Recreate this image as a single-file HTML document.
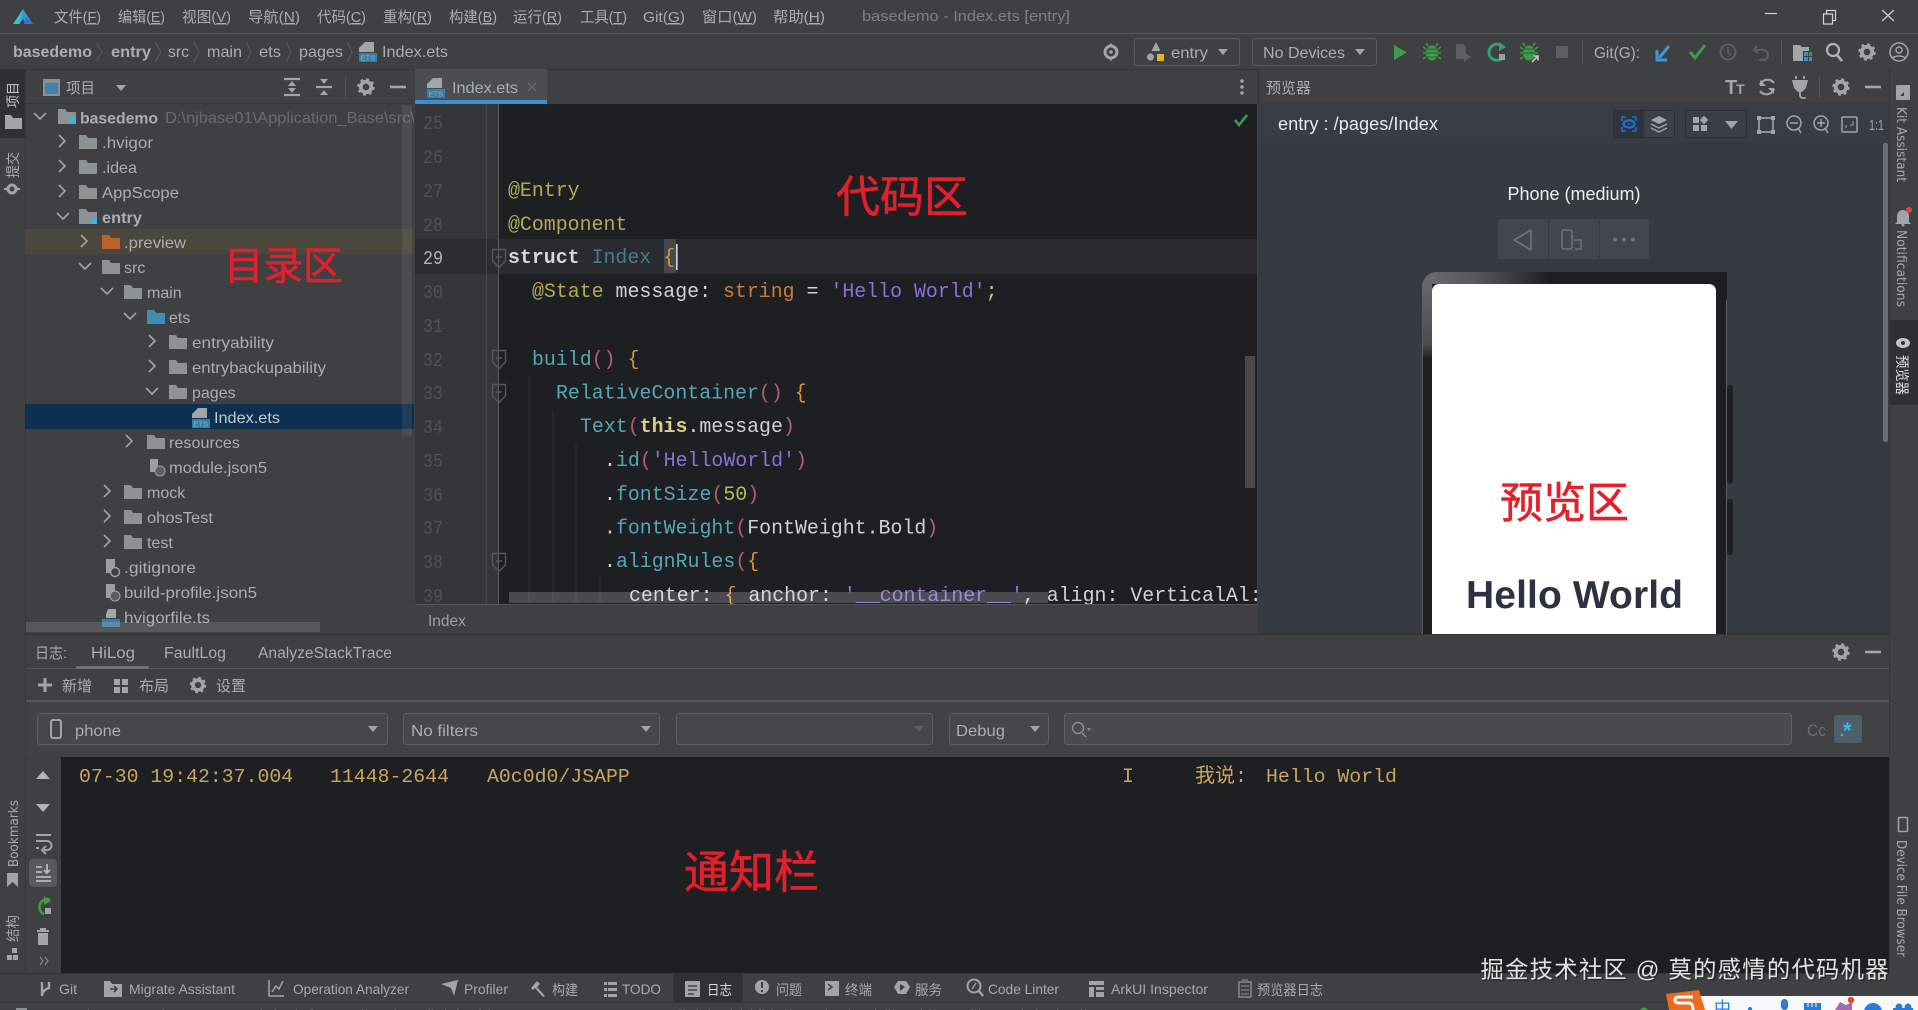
<!DOCTYPE html>
<html lang="zh-CN"><head><meta charset="utf-8"><title>basedemo - Index.ets [entry]</title>
<style>
html,body{margin:0;padding:0;width:1918px;height:1010px;overflow:hidden;background:#3e4042}
svg{display:block}
text{font-family:"Liberation Sans","Noto Sans CJK SC",sans-serif;white-space:pre}
.m{font-size:15px;fill:#a8aeb2}
.tr{font-size:16px;fill:#a9afb3}
.b{font-size:14px;fill:#a5abaf}
.c{font-family:"Liberation Mono","Noto Sans CJK SC",monospace;font-size:19.9px;fill:#cfd2d4}
.n{font-family:"Liberation Mono",monospace;font-size:19px;fill:#4f5254}
.v{font-family:"DejaVu Sans","Noto Sans CJK SC",sans-serif;font-size:13px;fill:#a5abaf}
.y{fill:#b0ab55}.w{fill:#cfd2d4}.cy{fill:#55a7b5}.pk{fill:#b0606c}.or{fill:#d9952f}.pu{fill:#8d6fd6}.st{fill:#c77d3c}.gn{fill:#a8c060}
.rd{fill:#e2202c;stroke:#e2202c;stroke-width:.6}
.s{fill:none;stroke:#a0a5a9;stroke-width:1.6}
.f{fill:#9a9fa3}
</style></head>
<body>
<svg width="1918" height="1010" viewBox="0 0 1918 1010" xmlns="http://www.w3.org/2000/svg">
<defs>
<clipPath id="ed"><rect x="499" y="103" width="758" height="501"/></clipPath>
<clipPath id="tp"><rect x="25" y="104" width="389" height="528"/></clipPath>
<clipPath id="ph"><rect x="1400" y="260" width="350" height="374"/></clipPath>
<clipPath id="sb"><rect x="0" y="1003" width="1918" height="7"/></clipPath>
<linearGradient id="tg" x1="0" y1="0" x2="1" y2="0"><stop offset="0" stop-color="#6a6d70"/><stop offset=".18" stop-color="#55585b"/><stop offset=".42" stop-color="#1d1e20"/></linearGradient>
<linearGradient id="lg" x1="0" y1="0" x2="0" y2="1"><stop offset="0" stop-color="#6a6d70"/><stop offset=".2" stop-color="#4a4c4f"/><stop offset=".24" stop-color="#1d1e20"/></linearGradient>
<path id="cr" class="s" d="M-3 -6L3 0L-3 6"/>
<path id="cd" class="s" d="M-6 -3L0 3L6 -3"/>
<path id="fo" fill="#8c9296" d="M0 -8h7l2 3h9v11H0z"/>
<path id="fb" fill="#3f8db4" d="M0 -8h7l2 3h9v11H0z"/>
<path id="fp" fill="#b9632c" d="M0 -8h7l2 3h9v11H0z"/>
<g id="fm"><path fill="#8c9296" d="M0 -9h7l2 3h9v12H0z"/><rect x="12" y="0" width="6" height="6" fill="#3eb1e6"/></g>
<g id="ets"><path fill="#a0a6aa" d="M6 0h9v10H0V6z"/><rect x="0" y="11" width="18" height="9" fill="#3a7ea6"/><text x="1.5" y="18.5" font-size="7.5" fill="#6cb6dc">ETS</text></g>
<g id="gear"><circle r="5.5" fill="none" stroke="#a0a5a9" stroke-width="4"/><circle r="8" fill="none" stroke="#a0a5a9" stroke-width="2.4" stroke-dasharray="3 3.28"/></g>
<path id="dd" fill="#a0a5a9" d="M-5 -3H5L0 3z"/>
<g id="fold"><path fill="none" stroke="#54575a" stroke-width="1.4" d="M-6.5 -8.5H6.5V3L0 9.5L-6.5 3z"/><path stroke="#54575a" stroke-width="1.4" d="M-3 -1H3"/></g>
</defs>

<!-- base -->
<rect width="1918" height="1010" fill="#3e4042"/>
<rect x="0" y="33" width="1918" height="1" fill="#55575a"/>
<rect x="0" y="69" width="1918" height="1" fill="#323436"/>

<!-- title -->
<path d="M23 9L33 24H26L23 19L19.5 24H13z" fill="#2f9ad6"/><path d="M23 9L18 17L13 24H19.5z" fill="#37c4c9"/><path d="M26.5 17L33 24H24z" fill="#3b6fd9"/>
<text class="m" x="54" y="22" textLength="47" lengthAdjust="spacingAndGlyphs">文件(<tspan text-decoration="underline">F</tspan>)</text>
<text class="m" x="118" y="22" textLength="47" lengthAdjust="spacingAndGlyphs">编辑(<tspan text-decoration="underline">E</tspan>)</text>
<text class="m" x="182" y="22" textLength="49" lengthAdjust="spacingAndGlyphs">视图(<tspan text-decoration="underline">V</tspan>)</text>
<text class="m" x="248" y="22" textLength="52" lengthAdjust="spacingAndGlyphs">导航(<tspan text-decoration="underline">N</tspan>)</text>
<text class="m" x="317" y="22" textLength="49" lengthAdjust="spacingAndGlyphs">代码(<tspan text-decoration="underline">C</tspan>)</text>
<text class="m" x="383" y="22" textLength="49" lengthAdjust="spacingAndGlyphs">重构(<tspan text-decoration="underline">R</tspan>)</text>
<text class="m" x="449" y="22" textLength="48" lengthAdjust="spacingAndGlyphs">构建(<tspan text-decoration="underline">B</tspan>)</text>
<text class="m" x="513" y="22" textLength="49" lengthAdjust="spacingAndGlyphs">运行(<tspan text-decoration="underline">R</tspan>)</text>
<text class="m" x="580" y="22" textLength="47" lengthAdjust="spacingAndGlyphs">工具(<tspan text-decoration="underline">T</tspan>)</text>
<text class="m" x="643" y="22" textLength="42" lengthAdjust="spacingAndGlyphs">Git(<tspan text-decoration="underline">G</tspan>)</text>
<text class="m" x="702" y="22" textLength="55" lengthAdjust="spacingAndGlyphs">窗口(<tspan text-decoration="underline">W</tspan>)</text>
<text class="m" x="773" y="22" textLength="52" lengthAdjust="spacingAndGlyphs">帮助(<tspan text-decoration="underline">H</tspan>)</text>
<text x="862" y="21" font-size="15" fill="#7c8185" textLength="208" lengthAdjust="spacingAndGlyphs">basedemo - Index.ets [entry]</text>
<path d="M1765 13.5H1777" stroke="#d0d2d4" stroke-width="1.2"/>
<path d="M1823.5 14h9v10h-9zM1826.5 14v-3.5h9v10h-3" fill="none" stroke="#d0d2d4" stroke-width="1.2"/>
<path d="M1882 10L1894 21M1894 10L1882 21" stroke="#d0d2d4" stroke-width="1.2"/>

<!-- breadcrumb -->
<text x="13" y="57" font-weight="bold" class="tr" textLength="79" lengthAdjust="spacingAndGlyphs">basedemo</text>
<text x="111" y="57" font-weight="bold" class="tr" textLength="40" lengthAdjust="spacingAndGlyphs">entry</text>
<text x="168" y="57" class="tr" textLength="21" lengthAdjust="spacingAndGlyphs">src</text>
<text x="207" y="57" class="tr" textLength="35" lengthAdjust="spacingAndGlyphs">main</text>
<text x="259" y="57" class="tr" textLength="22" lengthAdjust="spacingAndGlyphs">ets</text>
<text x="299" y="57" class="tr" textLength="44" lengthAdjust="spacingAndGlyphs">pages</text>
<text x="382" y="57" class="tr" textLength="66" lengthAdjust="spacingAndGlyphs">Index.ets</text>
<path d="M96 42L102 52L96 62M155 42L161 52L155 62M194 42L199 52L194 62M246 42L251 52L246 62M286 42L291 52L286 62M347 42L352 52L347 62" fill="none" stroke="#56595b" stroke-width="1.2"/>
<use href="#ets" x="359" y="42"/>

<!-- main toolbar right -->
<g transform="translate(1111,52)"><circle r="6" fill="none" stroke="#a0a5a9" stroke-width="3"/><circle r="1.8" fill="#a0a5a9"/><path d="M0 -8.5V-6M0 6V8.5" stroke="#a0a5a9" stroke-width="2"/></g>
<rect x="1134.5" y="38.5" width="105" height="27" rx="3" fill="#3e4042" stroke="#5a5d60"/>
<path d="M1156 42l4.5 9h-9z" fill="#a0a5a9"/><circle cx="1150.5" cy="57" r="3.5" fill="#a0a5a9"/><rect x="1157" y="54" width="7" height="7" fill="#e6b422"/>
<text x="1171" y="58" class="tr" textLength="37" lengthAdjust="spacingAndGlyphs">entry</text>
<use href="#dd" transform="translate(1223,52)"/>
<rect x="1252.5" y="38.5" width="124" height="27" rx="3" fill="#3e4042" stroke="#5a5d60"/>
<text x="1263" y="58" class="tr" textLength="82" lengthAdjust="spacingAndGlyphs">No Devices</text>
<use href="#dd" transform="translate(1360,52)"/>
<path d="M1394 45L1407 52.5L1394 60z" fill="#3f9a4a"/>
<g><ellipse cx="1432" cy="53" rx="6" ry="7.5" fill="#3f9a4a"/><path d="M1426 49h12M1426 53h12M1426 57h12" stroke="#2a5f30" stroke-width="1"/><path d="M1428 46l-2-3M1436 46l2-3M1426 49l-3-2M1438 49l3-2M1426 53h-3M1438 53h3M1426 57l-3 2M1438 57l3 2" stroke="#3f9a4a" stroke-width="1.6" fill="none"/></g>
<path d="M1456 44h7l3 3v12h-10z" fill="#5b5f62"/><path d="M1464 52l7 5-7 5z" fill="#5b5f62"/>
<path d="M1503 47a8 8 0 1 0 1 9" fill="none" stroke="#2ea36a" stroke-width="3"/><path d="M1499 42l7 5-7 4z" fill="#2ea36a"/><rect x="1499" y="54" width="6" height="6" fill="#9a9fa3"/>
<g><ellipse cx="1529" cy="53" rx="6" ry="7.5" fill="#3f9a4a"/><path d="M1523 49h12M1523 53h12" stroke="#2a5f30" stroke-width="1"/><path d="M1525 46l-2-3M1533 46l2-3M1523 49l-3-2M1535 49l3-2M1523 53h-3M1535 53h3M1523 57l-3 2M1535 57l3 2" stroke="#3f9a4a" stroke-width="1.6" fill="none"/></g><path d="M1532 62l6-6M1533.500 56h4.500v4.500" stroke="#c0c4c6" stroke-width="1.6" fill="none"/>
<rect x="1556" y="46" width="12" height="12" fill="#5b5f62"/>
<rect x="1582" y="40" width="1" height="24" fill="#535658"/>
<text x="1594" y="58" class="tr" textLength="46" lengthAdjust="spacingAndGlyphs">Git(G):</text>
<path d="M1669 46L1659 58M1657 50V60H1667" fill="none" stroke="#3a9ad9" stroke-width="3"/>
<path d="M1690 52l5 6 10-13" fill="none" stroke="#3f9a4a" stroke-width="3"/>
<circle cx="1728" cy="52" r="7.5" fill="none" stroke="#5b5f62" stroke-width="2"/><path d="M1728 47v5l3 3" fill="none" stroke="#5b5f62" stroke-width="1.6"/>
<path d="M1757 46l-3 4 4 3M1755 50h8a5 5 0 0 1 0 10h-4" fill="none" stroke="#5b5f62" stroke-width="2"/>
<rect x="1781" y="40" width="1" height="24" fill="#535658"/>
<path d="M1793 45h7l2 2h7v14h-16z" fill="#a0a5a9"/><rect x="1803" y="51" width="8" height="10" fill="#3e4042"/><rect x="1804" y="52" width="4" height="4" fill="#3a8ec9"/><rect x="1809" y="52" width="3" height="4" fill="#3f9a4a"/><rect x="1804" y="57" width="4" height="4" fill="#3a8ec9"/><rect x="1809" y="57" width="3" height="4" fill="#3a8ec9"/>
<circle cx="1833" cy="50" r="6" fill="none" stroke="#b0b4b6" stroke-width="2.2"/><path d="M1837 55l5 6" stroke="#b0b4b6" stroke-width="2.6"/>
<use href="#gear" transform="translate(1867,52) scale(.95)"/>
<circle cx="1899" cy="52" r="9" fill="none" stroke="#a0a5a9" stroke-width="1.5"/><circle cx="1899" cy="50" r="3" fill="none" stroke="#a0a5a9" stroke-width="1.4"/><path d="M1892 58q7-4 14 0" fill="none" stroke="#a0a5a9" stroke-width="1.4"/>

<!-- left stripe -->
<rect x="0" y="70" width="25" height="68" fill="#2e3032"/>
<rect x="25" y="69" width="1" height="904" fill="#36383a"/>
<text class="v" style="fill:#c0c4c6;font-size:14px" transform="translate(18,108) rotate(-90)" textLength="26" lengthAdjust="spacingAndGlyphs">项目</text>
<path d="M5 115h6l2 3h9v11H5z" fill="#a0a5a9"/>
<text class="v" transform="translate(18,178) rotate(-90)" style="font-size:14px" textLength="26" lengthAdjust="spacingAndGlyphs">提交</text>
<circle cx="12" cy="189" r="4" fill="none" stroke="#a0a5a9" stroke-width="3"/><path d="M4 189h3M17 189h3" stroke="#a0a5a9" stroke-width="2"/>
<text class="v" transform="translate(18,867) rotate(-90)" textLength="67" lengthAdjust="spacingAndGlyphs">Bookmarks</text>
<path d="M7 873h11v14l-5.5-5-5.5 5z" fill="#a0a5a9"/>
<text class="v" transform="translate(18,942) rotate(-90)" style="font-size:14px" textLength="27" lengthAdjust="spacingAndGlyphs">结构</text>
<rect x="12" y="948" width="5" height="5" fill="#a0a5a9"/><rect x="7" y="955" width="5" height="5" fill="#a0a5a9"/><rect x="13" y="955" width="5" height="5" fill="#a0a5a9"/>

<!-- project header -->
<rect x="26" y="103" width="389" height="1" fill="#35373a"/>
<rect x="43" y="79" width="17" height="17" fill="#8a9094"/><rect x="45" y="83" width="13" height="11" fill="#3d85a8"/>
<text x="66" y="93" class="m" textLength="29" lengthAdjust="spacingAndGlyphs">项目</text>
<use href="#dd" transform="translate(121,88)"/>
<path d="M284 79h16M284 95h16" stroke="#a0a5a9" stroke-width="2.2"/><path d="M288 86l4-5 4 5zM288 88l4 5 4-5z" fill="#a0a5a9"/>
<path d="M316 87h16" stroke="#a0a5a9" stroke-width="2.2"/><path d="M320 79h8l-4 5zM320 95h8l-4-5z" fill="#a0a5a9"/>
<rect x="345" y="76" width="1" height="22" fill="#505356"/>
<use href="#gear" transform="translate(366,87) scale(.95)"/>
<path d="M390 87h16" stroke="#a0a5a9" stroke-width="2.6"/>

<!-- tree -->
<rect x="25" y="229" width="389" height="25" fill="#4c473c"/>
<rect x="25" y="404" width="389" height="25" fill="#0d3050"/>
<g clip-path="url(#tp)">
<use href="#cd" x="40" y="116"/><use href="#fm" x="58" y="118"/>
<text x="80" y="123.5" class="tr" font-weight="bold" textLength="78" lengthAdjust="spacingAndGlyphs">basedemo</text>
<text x="165" y="123" font-size="15.6" fill="#686c6f" textLength="250" lengthAdjust="spacingAndGlyphs">D:\njbase01\Application_Base\src\</text>
<use href="#cr" x="62" y="141"/><use href="#fo" x="79" y="143"/><text x="102" y="148" class="tr" textLength="51" lengthAdjust="spacingAndGlyphs">.hvigor</text>
<use href="#cr" x="62" y="166"/><use href="#fo" x="79" y="168"/><text x="102" y="173" class="tr" textLength="35" lengthAdjust="spacingAndGlyphs">.idea</text>
<use href="#cr" x="62" y="191"/><use href="#fo" x="79" y="193"/><text x="102" y="198" class="tr" textLength="77" lengthAdjust="spacingAndGlyphs">AppScope</text>
<use href="#cd" x="63" y="216"/><use href="#fm" x="79" y="218"/><text x="102" y="223" class="tr" font-weight="bold" textLength="40" lengthAdjust="spacingAndGlyphs">entry</text>
<use href="#cr" x="84" y="241"/><use href="#fp" x="102" y="243"/><text x="124" y="248" class="tr" textLength="62" lengthAdjust="spacingAndGlyphs">.preview</text>
<use href="#cd" x="85" y="266"/><use href="#fo" x="102" y="268"/><text x="124" y="273" class="tr">src</text>
<use href="#cd" x="107" y="291"/><use href="#fo" x="124" y="293"/><text x="147" y="298" class="tr">main</text>
<use href="#cd" x="130" y="316"/><use href="#fb" x="147" y="318"/><text x="169" y="323" class="tr">ets</text>
<use href="#cr" x="152" y="341"/><use href="#fo" x="169" y="343"/><text x="192" y="348" class="tr" textLength="82" lengthAdjust="spacingAndGlyphs">entryability</text>
<use href="#cr" x="152" y="366"/><use href="#fo" x="169" y="368"/><text x="192" y="373" class="tr" textLength="134" lengthAdjust="spacingAndGlyphs">entrybackupability</text>
<use href="#cd" x="152" y="391"/><use href="#fo" x="169" y="393"/><text x="192" y="398" class="tr">pages</text>
<use href="#ets" x="192" y="408"/><text x="214" y="423" class="tr" style="fill:#c4cacd" textLength="66" lengthAdjust="spacingAndGlyphs">Index.ets</text>
<use href="#cr" x="129" y="441"/><use href="#fo" x="147" y="443"/><text x="169" y="448" class="tr" textLength="71" lengthAdjust="spacingAndGlyphs">resources</text>
<path d="M150 459h8v13h-8z" fill="#9a9fa3"/><circle cx="160" cy="471" r="5" fill="#5b5f62" stroke="#a0a5a9"/><text x="169" y="473" class="tr" textLength="98" lengthAdjust="spacingAndGlyphs">module.json5</text>
<use href="#cr" x="107" y="491"/><use href="#fo" x="124" y="493"/><text x="147" y="498" class="tr">mock</text>
<use href="#cr" x="107" y="516"/><use href="#fo" x="124" y="518"/><text x="147" y="523" class="tr" textLength="66" lengthAdjust="spacingAndGlyphs">ohosTest</text>
<use href="#cr" x="107" y="541"/><use href="#fo" x="124" y="543"/><text x="147" y="548" class="tr">test</text>
<path d="M106 559h9v14h-9z" fill="#9a9fa3"/><circle cx="115" cy="572" r="4.5" fill="#3e4042" stroke="#a0a5a9" stroke-width="1.4"/><text x="124" y="573" class="tr" textLength="72" lengthAdjust="spacingAndGlyphs">.gitignore</text>
<path d="M106 584h9v14h-9z" fill="#9a9fa3"/><circle cx="115" cy="596" r="5" fill="#5b5f62" stroke="#a0a5a9"/><text x="124" y="598" class="tr" textLength="133" lengthAdjust="spacingAndGlyphs">build-profile.json5</text>
<path d="M108 609h8v9h-10v-4z" fill="#a0a6aa"/><rect x="102" y="619" width="18" height="8" fill="#3a7ea6"/><text x="124" y="623" class="tr" textLength="86" lengthAdjust="spacingAndGlyphs">hvigorfile.ts</text>
</g>
<rect x="402" y="105" width="10" height="331" fill="#fff" opacity=".07"/>
<rect x="26" y="622" width="294" height="10" fill="#fff" opacity=".13"/>

<!-- editor tab bar -->
<rect x="415" y="69" width="132" height="34" fill="#4b4e51"/>
<rect x="415" y="100" width="132" height="4" fill="#3b8fd6"/>
<use href="#ets" x="427" y="78"/>
<text x="452" y="93" class="tr" textLength="66" lengthAdjust="spacingAndGlyphs">Index.ets</text>
<path d="M528 83l8 8M536 83l-8 8" stroke="#65696c" stroke-width="1.4"/>
<circle cx="1242" cy="81" r="1.8" fill="#a0a5a9"/><circle cx="1242" cy="87" r="1.8" fill="#a0a5a9"/><circle cx="1242" cy="93" r="1.8" fill="#a0a5a9"/>

<!-- editor -->
<rect x="415" y="104" width="84" height="500" fill="#343638"/>
<rect x="499" y="104" width="758" height="500" fill="#1e1f23"/>
<rect x="415" y="239" width="84" height="35" fill="#2b2d31"/>
<rect x="499" y="239" width="758" height="35" fill="#292b30"/>
<rect x="486" y="104" width="1" height="500" fill="#45474a"/>
<rect x="498" y="104" width="1" height="500" fill="#5a5c5f"/>
<path d="M529 375V604M553 410V604M576 444V604M600 578V604" stroke="#2d2f33" stroke-width="1"/>
<text class="n" x="423" y="129" textLength="20" lengthAdjust="spacingAndGlyphs">25</text>
<text class="n" x="423" y="163" textLength="20" lengthAdjust="spacingAndGlyphs">26</text>
<text class="n" x="423" y="197" textLength="20" lengthAdjust="spacingAndGlyphs">27</text>
<text class="n" x="423" y="231" textLength="20" lengthAdjust="spacingAndGlyphs">28</text>
<text class="n" x="423" y="264" textLength="20" lengthAdjust="spacingAndGlyphs" style="fill:#b3b6b8">29</text>
<text class="n" x="423" y="298" textLength="20" lengthAdjust="spacingAndGlyphs">30</text>
<text class="n" x="423" y="332" textLength="20" lengthAdjust="spacingAndGlyphs">31</text>
<text class="n" x="423" y="366" textLength="20" lengthAdjust="spacingAndGlyphs">32</text>
<text class="n" x="423" y="399" textLength="20" lengthAdjust="spacingAndGlyphs">33</text>
<text class="n" x="423" y="433" textLength="20" lengthAdjust="spacingAndGlyphs">34</text>
<text class="n" x="423" y="467" textLength="20" lengthAdjust="spacingAndGlyphs">35</text>
<text class="n" x="423" y="501" textLength="20" lengthAdjust="spacingAndGlyphs">36</text>
<text class="n" x="423" y="534" textLength="20" lengthAdjust="spacingAndGlyphs">37</text>
<text class="n" x="423" y="568" textLength="20" lengthAdjust="spacingAndGlyphs">38</text>
<text class="n" x="423" y="602" textLength="20" lengthAdjust="spacingAndGlyphs">39</text>
<use href="#fold" x="499" y="258"/><use href="#fold" x="499" y="359"/><use href="#fold" x="499" y="393"/><use href="#fold" x="499" y="562"/>
<rect x="664" y="239" width="12" height="34" fill="#45484d"/>
<g clip-path="url(#ed)">
<text class="c y" x="508" y="196">@Entry</text>
<text class="c y" x="508" y="230">@Component</text>
<text class="c" x="508" y="263"><tspan font-weight="bold" fill="#d5d8da">struct</tspan> <tspan fill="#457f85">Index</tspan> <tspan class="or">{</tspan></text>
<text class="c" x="532" y="297"><tspan class="y">@State</tspan> message: <tspan class="st">string</tspan> = <tspan class="pu">'Hello World'</tspan><tspan fill="#c9c48a">;</tspan></text>
<text class="c" x="532" y="365"><tspan class="cy">build</tspan><tspan class="pk">()</tspan> <tspan class="or">{</tspan></text>
<text class="c" x="556" y="398.5"><tspan class="cy">RelativeContainer</tspan><tspan class="pk">()</tspan> <tspan class="or">{</tspan></text>
<text class="c" x="580" y="432"><tspan class="cy">Text</tspan><tspan class="pk">(</tspan><tspan font-weight="bold" fill="#d6cf8a">this</tspan>.message<tspan class="pk">)</tspan></text>
<text class="c" x="604" y="466">.<tspan class="cy">id</tspan><tspan class="pk">(</tspan><tspan class="pu">'HelloWorld'</tspan><tspan class="pk">)</tspan></text>
<text class="c" x="604" y="500">.<tspan class="cy">fontSize</tspan><tspan class="pk">(</tspan><tspan class="gn">50</tspan><tspan class="pk">)</tspan></text>
<text class="c" x="604" y="533.5">.<tspan class="cy">fontWeight</tspan><tspan class="pk">(</tspan>FontWeight.Bold<tspan class="pk">)</tspan></text>
<text class="c" x="604" y="567">.<tspan class="cy">alignRules</tspan><tspan class="pk">(</tspan><tspan class="or">{</tspan></text>
<text class="c" x="629" y="601">center: <tspan class="or">{</tspan> anchor: <tspan class="pu">'__container__'</tspan>, align: VerticalAl:</text>
</g>
<rect x="676" y="244" width="1.6" height="26" fill="#d5d8da"/>
<text x="836" y="212" font-size="44" class="rd">代码区</text>
<path d="M1235 120l4 5 8-10" fill="none" stroke="#3f9a55" stroke-width="2.6"/>
<rect x="1245" y="356" width="10" height="132" fill="#47484b"/>
<rect x="509" y="592" width="539" height="11" fill="#fff" opacity=".2"/>
<rect x="415" y="604" width="843" height="1" fill="#55575a"/>
<text x="428" y="626" font-size="15.5" fill="#9ba1a5">Index</text>

<!-- tree label -->
<text x="224" y="280" font-size="39.500" class="rd">目录区</text>

<!-- preview panel -->
<rect x="1258" y="69" width="631" height="34" fill="#3e4042"/>
<rect x="1258" y="69" width="1" height="34" fill="#333537"/>
<text x="1266" y="93" font-size="15" fill="#a8aeb2">预览器</text>
<text x="1725" y="94" font-size="20" fill="#a0a5a9" font-weight="bold">T</text><text x="1736" y="94" font-size="14" fill="#a0a5a9" font-weight="bold">T</text>
<path d="M1774 83a8 8 0 0 0-14 2M1760 91a8 8 0 0 0 14-2" fill="none" stroke="#a0a5a9" stroke-width="2.2"/><path d="M1760 80v6h6M1774 94v-6h-6" fill="#a0a5a9"/>
<path d="M1792 80h16l-2 8-4 4h-4l-4-4z" fill="#a0a5a9"/><path d="M1796 79v-3M1804 79v-3M1800 92v3q0 3 3 3h3" stroke="#a0a5a9" stroke-width="1.8" fill="none"/>
<rect x="1819" y="76" width="1" height="22" fill="#505356"/>
<use href="#gear" transform="translate(1841,87) scale(.95)"/>
<path d="M1865 87h16" stroke="#a0a5a9" stroke-width="2.6"/>
<rect x="1258" y="103" width="631" height="531" fill="#363b42"/>
<rect x="1258" y="103" width="631" height="40" fill="#383d45"/>
<text x="1278" y="130" font-size="18" fill="#e6e8ea" textLength="160" lengthAdjust="spacingAndGlyphs">entry : /pages/Index</text>
<rect x="1613.5" y="110.5" width="61" height="27" rx="3" fill="#2f343b" stroke="#2c3036"/><rect x="1644" y="111" width="30" height="26" rx="2" fill="#3c4149"/>
<path d="M1622 121v-4h4M1636 121v-4h-4M1622 127v4h4M1636 127v4h-4" fill="none" stroke="#1a72d8" stroke-width="1.6"/><ellipse cx="1629" cy="124" rx="5.500" ry="3.600" fill="none" stroke="#1a72d8" stroke-width="2.200"/><circle cx="1629" cy="124" r="1" fill="#1a72d8"/>
<path d="M1659 116l8 4-8 4-8-4z" fill="#a0a5a9"/><path d="M1651 124l8 4 8-4M1651 128l8 4 8-4" fill="none" stroke="#a0a5a9" stroke-width="1.4"/>
<rect x="1685.5" y="110.5" width="61" height="27" rx="3" fill="#3a3f47" stroke="#2c3036"/>
<rect x="1693" y="117" width="6" height="6" fill="#a0a5a9"/><rect x="1701" y="117" width="6" height="6" fill="#a0a5a9" transform="rotate(45 1704 120)"/><rect x="1693" y="125" width="6" height="6" fill="#a0a5a9"/><rect x="1701" y="125" width="6" height="6" fill="#a0a5a9"/>
<path d="M1725 121h13l-6.500 8z" fill="#a0a5a9"/>
<rect x="1759" y="118" width="14" height="14" fill="none" stroke="#a0a5a9" stroke-width="1.6"/><path d="M1757 116h4v4h-4zM1771 116h4v4h-4zM1757 130h4v4h-4zM1771 130h4v4h-4z" fill="#a0a5a9"/>
<circle cx="1794" cy="123" r="7" fill="none" stroke="#a0a5a9" stroke-width="1.5"/><path d="M1790 123h8M1798 128l3 5" stroke="#a0a5a9" stroke-width="1.5"/>
<circle cx="1821" cy="123" r="7" fill="none" stroke="#a0a5a9" stroke-width="1.5"/><path d="M1817 123h8M1821 119v8M1825 128l3 5" stroke="#a0a5a9" stroke-width="1.5"/>
<rect x="1842" y="117" width="15" height="15" rx="1" fill="none" stroke="#a0a5a9" stroke-width="1.5"/><path d="M1853 121v4h-3M1846 128v-3" stroke="#a0a5a9" fill="none"/>
<text x="1869" y="130" font-size="15" fill="#a0a5a9" textLength="15" lengthAdjust="spacingAndGlyphs">1:1</text>
<rect x="1883" y="143" width="5" height="299" rx="2" fill="#6a6e73"/>
<text x="1574" y="200" font-size="18" text-anchor="middle" fill="#eceef0">Phone (medium)</text>
<rect x="1498" y="219" width="151" height="40" rx="2" fill="#414650"/>
<rect x="1548" y="219" width="1" height="40" fill="#363b42"/><rect x="1599" y="219" width="1" height="40" fill="#363b42"/>
<path d="M1531 230v20l-17-10z" fill="none" stroke="#6f747b" stroke-width="1.6"/>
<rect x="1562" y="230" width="10" height="19" rx="2" fill="none" stroke="#6f747b" stroke-width="1.5"/><path d="M1574 240h7v9h-6" fill="none" stroke="#6f747b" stroke-width="1.5"/>
<circle cx="1615" cy="239.500" r="2" fill="#6f747b"/><circle cx="1624" cy="239.500" r="2" fill="#6f747b"/><circle cx="1633" cy="239.500" r="2" fill="#6f747b"/>
<g clip-path="url(#ph)">
<rect x="1727" y="385" width="6" height="99" rx="3" fill="#1f2023"/><rect x="1727" y="499" width="6" height="56" rx="3" fill="#1f2023"/>
<rect x="1422" y="272" width="305" height="380" rx="15" fill="#1d1e20"/>
<path d="M1437 272H1727V284H1422V287a15 15 0 0 1 15-15z" fill="url(#tg)"/>
<path d="M1422 287a15 15 0 0 1 15-15v12h-5V634H1422z" fill="url(#lg)"/>
<path d="M1422.500 300V634M1726.500 300V634" stroke="#5a5d60"/>
<rect x="1432" y="284" width="284" height="380" rx="7" fill="#fff"/>
<text x="1466" y="608" font-size="39" font-weight="bold" fill="#2c3240" textLength="217">Hello World</text>
<text x="1500" y="518" font-size="43" class="rd">预览区</text>
</g>

<!-- right stripe -->
<rect x="1889" y="69" width="29" height="904" fill="#3e4042"/>
<rect x="1889" y="69" width="1" height="904" fill="#34363a"/>
<rect x="1890" y="320" width="28" height="85" fill="#2e3032"/>
<rect x="1896" y="85" width="14" height="15" rx="1" fill="#a0a5a9"/><path d="M1900 96l4-4v4z" fill="#3e4042"/>
<text class="v" transform="translate(1897,107) rotate(90)" textLength="75" lengthAdjust="spacingAndGlyphs">Kit Assistant</text>
<path d="M1903 210a6 6 0 0 1 6 6v6l2 2h-16l2-2v-6a6 6 0 0 1 6-6z" fill="#a0a5a9"/><circle cx="1909" cy="210" r="3" fill="#d9453b"/><circle cx="1903" cy="225" r="1.500" fill="#a0a5a9"/>
<text class="v" transform="translate(1897,230) rotate(90)" textLength="77" lengthAdjust="spacingAndGlyphs">Notifications</text>
<ellipse cx="1903" cy="343" rx="7" ry="5" fill="#c0c4c6"/><circle cx="1903" cy="343" r="2" fill="#2e3032"/>
<text class="v" style="fill:#dfe1e3;font-size:14px" transform="translate(1897,355) rotate(90)" textLength="40" lengthAdjust="spacingAndGlyphs">预览器</text>
<rect x="1898.500" y="817.500" width="9" height="14" rx="1" fill="none" stroke="#a0a5a9" stroke-width="1.600"/>
<text class="v" transform="translate(1897,840) rotate(90)" textLength="117" lengthAdjust="spacingAndGlyphs">Device File Browser</text>

<!-- log panel -->
<rect x="26" y="634" width="1863" height="1" fill="#333537"/>
<rect x="26" y="635" width="1863" height="33" fill="#3e4042"/>
<rect x="26" y="668" width="1863" height="1" fill="#55575a"/>
<text x="35" y="658" font-size="15" fill="#a8aeb2" textLength="32" lengthAdjust="spacingAndGlyphs">日志:</text>
<text x="91" y="658" font-size="16" fill="#a8aeb2" textLength="44" lengthAdjust="spacingAndGlyphs">HiLog</text>
<text x="164" y="658" font-size="15.500" fill="#a8aeb2" textLength="62" lengthAdjust="spacingAndGlyphs">FaultLog</text>
<text x="258" y="658" font-size="15.500" fill="#a8aeb2" textLength="134" lengthAdjust="spacingAndGlyphs">AnalyzeStackTrace</text>
<rect x="76" y="666" width="73" height="3" rx="1" fill="#6d7174"/>
<use href="#gear" transform="translate(1841,652) scale(.95)"/>
<path d="M1865 652h16" stroke="#a0a5a9" stroke-width="2.600"/>
<path d="M45 678v14M38 685h14" stroke="#a0a5a9" stroke-width="3"/>
<text x="62" y="691" font-size="15" fill="#a8aeb2">新增</text>
<rect x="114" y="679" width="6" height="6" fill="#a0a5a9"/><rect x="122" y="679" width="6" height="6" fill="#a0a5a9"/><rect x="114" y="687" width="6" height="6" fill="#a0a5a9"/><rect x="122" y="687" width="6" height="6" fill="#a0a5a9"/>
<text x="139" y="691" font-size="15" fill="#a8aeb2">布局</text>
<use href="#gear" transform="translate(198,685) scale(.9)"/>
<text x="216" y="691" font-size="15" fill="#a8aeb2">设置</text>
<rect x="26" y="700" width="1863" height="2" fill="#55575a"/>
<rect x="26" y="702" width="1863" height="55" fill="#404244"/>
<rect x="37.500" y="713.500" width="350" height="31" rx="3" fill="#45474a" stroke="#5d6063"/>
<rect x="51" y="720" width="10" height="18" rx="2" fill="none" stroke="#a0a5a9" stroke-width="2"/>
<text x="75" y="736" class="tr" textLength="46" lengthAdjust="spacingAndGlyphs">phone</text>
<use href="#dd" transform="translate(373,729)"/>
<rect x="403.500" y="713.500" width="256" height="31" rx="3" fill="#45474a" stroke="#5d6063"/>
<text x="411" y="736" class="tr" textLength="67" lengthAdjust="spacingAndGlyphs">No filters</text>
<use href="#dd" transform="translate(646,729)"/>
<rect x="676.500" y="713.500" width="256" height="31" rx="3" fill="#45474a" stroke="#5d6063"/>
<path d="M914 726h10l-5 6z" fill="#5d6063"/>
<rect x="949.500" y="713.500" width="99" height="31" rx="3" fill="#45474a" stroke="#5d6063"/>
<text x="956" y="736" class="tr" textLength="49" lengthAdjust="spacingAndGlyphs">Debug</text>
<use href="#dd" transform="translate(1035,729)"/>
<rect x="1064.500" y="713.500" width="727" height="31" rx="3" fill="#494b4e" stroke="#5d6063"/>
<circle cx="1078" cy="728" r="5.500" fill="none" stroke="#8a8f93" stroke-width="1.400"/><path d="M1082 733l4 4" stroke="#8a8f93" stroke-width="1.400"/><path d="M1087 728h4l-2 3z" fill="#8a8f93"/>
<text x="1807" y="736" font-size="17" fill="#6a6e71" textLength="19" lengthAdjust="spacingAndGlyphs">Cc</text>
<rect x="1834" y="715" width="28" height="28" rx="3" fill="#4e5f6a"/>
<text x="1843" y="738" font-size="22" fill="#3bb5f0" font-weight="bold">*</text><circle cx="1842" cy="735" r="1.300" fill="#3bb5f0"/>

<rect x="26" y="757" width="35" height="216" fill="#3e4042"/>
<rect x="61" y="757" width="1828" height="216" fill="#1e1f23"/>
<path d="M43 771l7 8H36z" fill="#b0b4b6"/>
<path d="M36 804h14l-7 8z" fill="#b0b4b6"/>
<path d="M36 835h15M36 841h11a4 4 0 0 1 0 9h-3M36 848h3M46 846l-4 4 4 4" fill="none" stroke="#a0a5a9" stroke-width="2"/>
<rect x="29" y="859" width="28" height="28" rx="4" fill="#565a5e"/>
<path d="M36 867h6M36 872h6M36 877h15M36 881h15M47 864v9M44 870l3 3 3-3" fill="none" stroke="#b5b9bb" stroke-width="1.800"/>
<path d="M50 900a7 7 0 1 0 -6 14" fill="none" stroke="#3f9a4a" stroke-width="2.600"/><path d="M44 896l7 5-7 4z" fill="#3f9a4a"/><rect x="45" y="908" width="6" height="6" fill="#a0a5a9"/>
<path d="M37 930h12v2h-12zM40 928h6v2h-6zM38 933h10v12h-10z" fill="#a0a5a9"/>
<path d="M40 957l3 4-3 4M45 957l3 4-3 4" fill="none" stroke="#8a8f93" stroke-width="1.100"/>
<text class="c" x="79" y="782" style="fill:#c9a65e;font-size:19.830px">07-30 19:42:37.004</text>
<text class="c" x="330" y="782" style="fill:#c9a65e;font-size:19.830px">11448-2644</text>
<text class="c" x="487" y="782" style="fill:#c9a65e;font-size:19.830px">A0c0d0/JSAPP</text>
<text class="c" x="1122" y="782" style="fill:#c9a65e">I</text>
<text class="c" x="1195" y="782" style="fill:#c9a65e;font-size:20px">我说:</text>
<text class="c" x="1266" y="782" style="fill:#c9a65e;font-size:19.830px">Hello World</text>
<text x="684" y="888" font-size="45" class="rd">通知栏</text>

<!-- bottom tool bar -->
<rect x="0" y="973" width="1889" height="1" fill="#333537"/>
<rect x="0" y="974" width="1918" height="28" fill="#3e4042"/>
<rect x="673" y="974" width="70" height="28" fill="#2f3133"/>
<rect x="0" y="1002" width="1918" height="1" fill="#353739"/>
<path d="M42 982v14M42 996q0-6 7-8v-6" fill="none" stroke="#a0a5a9" stroke-width="2.400"/>
<text x="59" y="994" class="b" textLength="18" lengthAdjust="spacingAndGlyphs">Git</text>
<path d="M104 981h6l2 3h10v13h-18z" fill="#a0a5a9"/><path d="M110 989h7M114 986l3 3-3 3" fill="none" stroke="#3e4042" stroke-width="1.600"/>
<text x="129" y="994" class="b" textLength="106" lengthAdjust="spacingAndGlyphs">Migrate Assistant</text>
<path d="M269 980v16h15M272 992l4-6 3 3 4-8" fill="none" stroke="#a0a5a9" stroke-width="1.500"/>
<text x="293" y="994" class="b" textLength="116" lengthAdjust="spacingAndGlyphs">Operation Analyzer</text>
<path d="M441 984l17-4-4 16-3-8z" fill="#a0a5a9"/>
<text x="464" y="994" class="b" textLength="44" lengthAdjust="spacingAndGlyphs">Profiler</text>
<path d="M531 988l6-7 3 3-3 3 8 9-2 1-8-9-2 2z" fill="#a0a5a9"/>
<text x="552" y="995" class="b" textLength="26" lengthAdjust="spacingAndGlyphs">构建</text>
<path d="M604 982h3v3h-3zM604 988h3v3h-3zM604 994h3v3h-3zM608 982h9v3h-9zM608 988h9v3h-9zM608 994h9v3h-9z" fill="#a0a5a9"/>
<text x="622" y="994" class="b" textLength="39" lengthAdjust="spacingAndGlyphs">TODO</text>
<rect x="685" y="981" width="15" height="16" rx="1" fill="#a0a5a9"/><path d="M688 986h9M688 990h9M688 994h6" stroke="#2f3133" stroke-width="1.200"/>
<text x="707" y="995" class="b" style="fill:#d5d8da" textLength="25" lengthAdjust="spacingAndGlyphs">日志</text>
<circle cx="762" cy="987" r="7" fill="#a0a5a9"/><path d="M762 982v6M762 990v2" stroke="#3e4042" stroke-width="2"/>
<text x="776" y="995" class="b" textLength="26" lengthAdjust="spacingAndGlyphs">问题</text>
<rect x="825" y="981" width="14" height="15" fill="#a0a5a9"/><path d="M828 984l4 3-4 3" fill="none" stroke="#3e4042" stroke-width="1.500"/>
<text x="845" y="995" class="b" textLength="27" lengthAdjust="spacingAndGlyphs">终端</text>
<path d="M898 981h8l4 6-4 7h-8l-4-7z" fill="#a0a5a9"/><path d="M900 984l5 3-5 4z" fill="#3e4042"/>
<text x="915" y="995" class="b" textLength="27" lengthAdjust="spacingAndGlyphs">服务</text>
<circle cx="974" cy="986" r="6.500" fill="none" stroke="#a0a5a9" stroke-width="2"/><path d="M979 991l4 5" stroke="#a0a5a9" stroke-width="2.400"/><path d="M972 989l4-6" stroke="#a0a5a9" stroke-width="1.400"/>
<text x="988" y="994" class="b" textLength="71" lengthAdjust="spacingAndGlyphs">Code Linter</text>
<path d="M1089 981h15v4h-15zM1089 987h5v10h-5zM1096 987h8v3h-8zM1096 992h8v5h-8z" fill="#a0a5a9"/>
<text x="1111" y="994" class="b" textLength="97" lengthAdjust="spacingAndGlyphs">ArkUI Inspector</text>
<rect x="1239" y="982" width="12" height="15" fill="none" stroke="#8a8f93" stroke-width="1.400"/><path d="M1242 980h6M1241 986h8M1241 990h8M1241 994h8" stroke="#8a8f93" stroke-width="1"/>
<text x="1257" y="995" class="b" textLength="66" lengthAdjust="spacingAndGlyphs">预览器日志</text>

<!-- status bar clipped text -->
<g clip-path="url(#sb)" opacity=".75">
<rect x="16" y="1008" width="11" height="3" fill="#a5abaf"/>
<text x="55" y="1019.500" font-size="14" fill="#a5abaf" letter-spacing="1">Version Control  Run: entry default@CompileArkTS finished in 3 sec 124 ms   Process finished with exit code</text>
<text x="740" y="1019.500" font-size="14" fill="#a5abaf" letter-spacing="1">build the app   load file   hilog   filter   default   line  34:16   UTF-8   4 spaces</text>
</g>
<circle cx="1644" cy="1012" r="4.500" fill="#3f9a4a"/>

<!-- IME -->
<rect x="1698" y="996" width="220" height="14" fill="#f7f8fa"/>
<path d="M1666 994L1699 990L1705 1010H1669z" fill="#ee6a1c"/>
<path d="M1693 997h-14q-4 0-4 3t4 3h10q4 0 4 7" fill="none" stroke="#fff" stroke-width="3"/>
<text x="1714" y="1014" font-size="17" fill="#2b7bd8">中</text>
<circle cx="1750" cy="1009" r="2" fill="#2b7bd8"/>
<rect x="1781" y="999" width="7" height="11" rx="3.500" fill="#2b7bd8"/>
<rect x="1804" y="1003" width="17" height="7" fill="#2b7bd8"/><path d="M1808 1003v4M1812 1003v4M1816 1003v4" stroke="#fff"/>
<path d="M1835 1010l5-8 6 3 6-3v8z" fill="#a36ab0"/><circle cx="1851" cy="1000" r="3.200" fill="#e8432e"/>
<circle cx="1873" cy="1012" r="9" fill="#2b7bd8"/>
<circle cx="1899" cy="1007" r="3.500" fill="#2b7bd8"/><circle cx="1908" cy="1007" r="3.500" fill="#2b7bd8"/><rect x="1893" y="1008" width="20" height="3" fill="#2b7bd8"/>

<!-- watermark -->
<text x="1482" y="979" font-size="23.300" fill="#222" opacity=".7" textLength="408">掘金技术社区 @ 莫的感情的代码机器</text>
<text x="1480.500" y="977.500" font-size="23.300" fill="#e2e2e2" textLength="408">掘金技术社区 @ 莫的感情的代码机器</text>
</svg>
</body></html>
